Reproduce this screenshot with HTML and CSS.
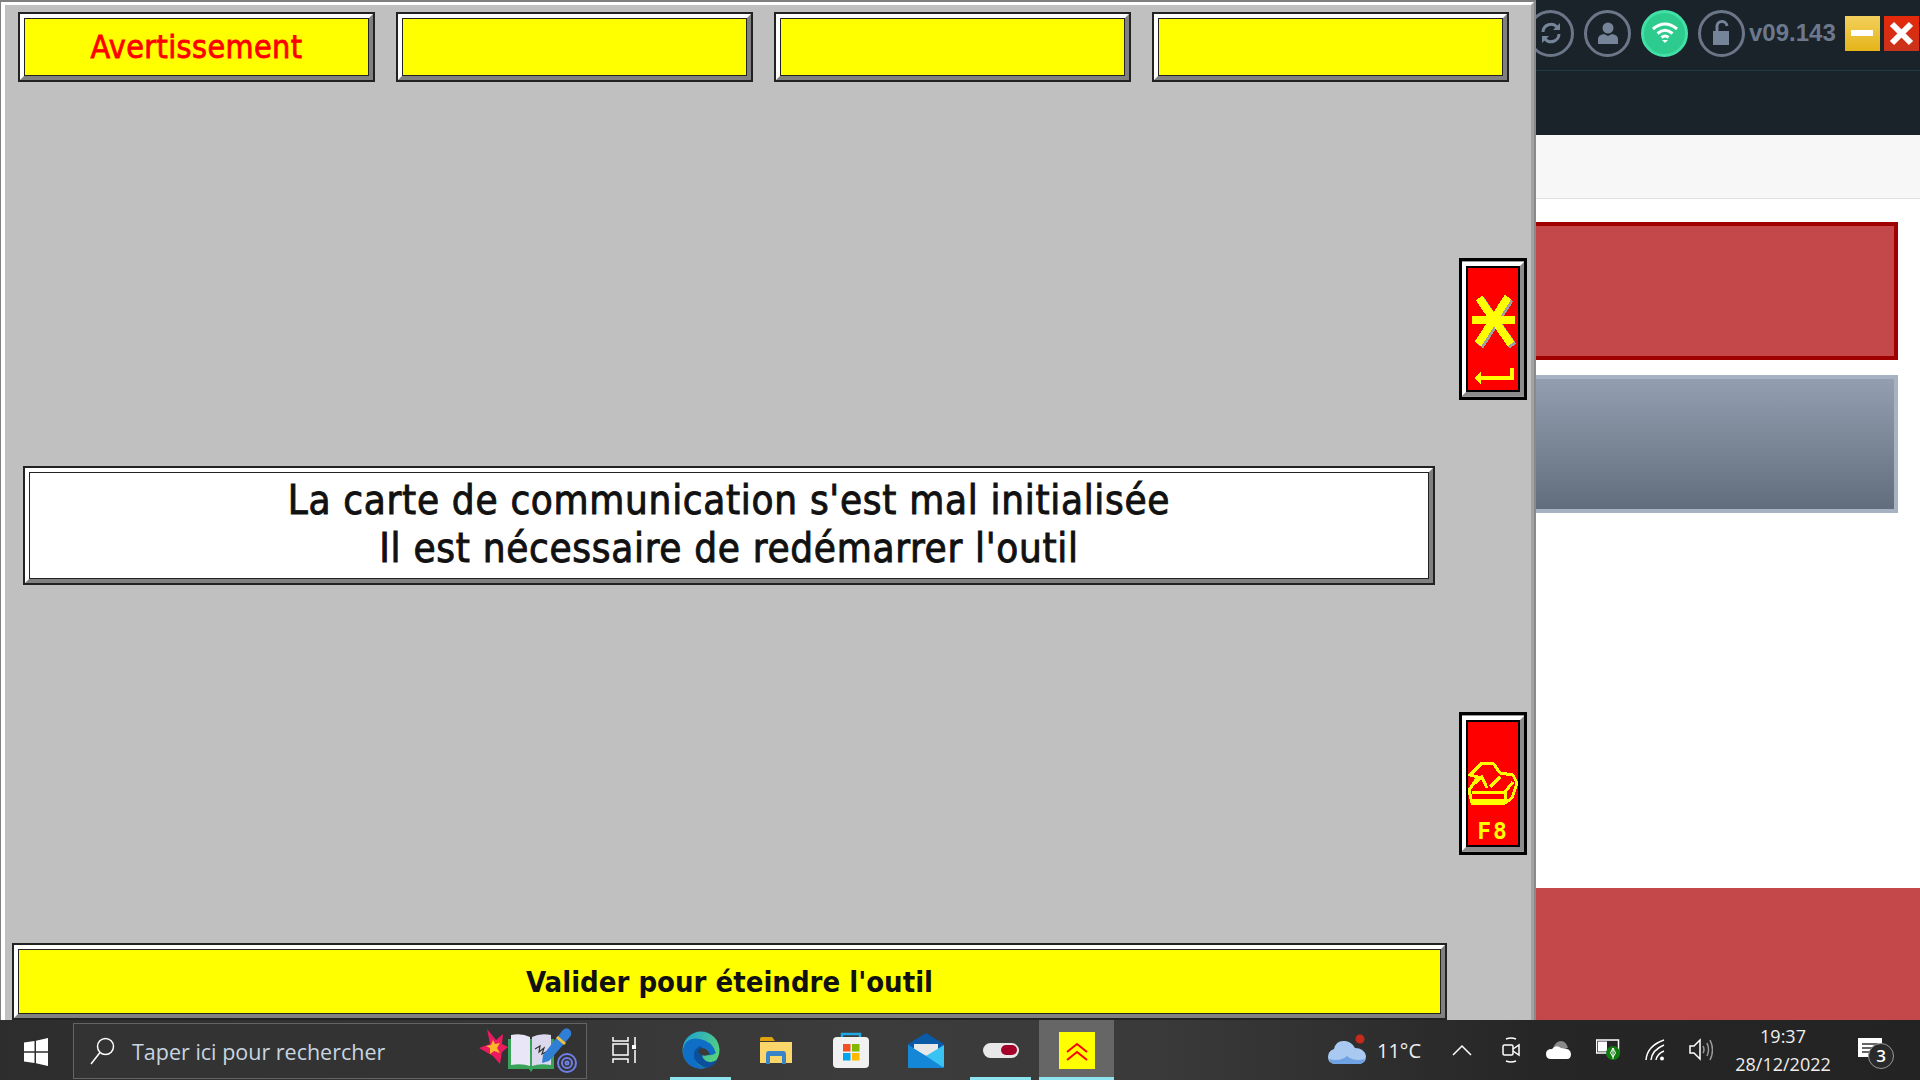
FILE: index.html
```html
<!DOCTYPE html>
<html lang="fr">
<head>
  <meta charset="UTF-8">
  <title>Avertissement</title>
  <link rel="stylesheet" href="styles.css">
</head>
<body>
  <div class="desktop">
    <!-- Tool window -->
    <div class="window">
      <div class="window-body">
        <div class="top-row">
          <div class="bevel tab"><div class="bevel-face tab-warning">Avertissement</div></div>
          <div class="bevel tab"><div class="bevel-face"></div></div>
          <div class="bevel tab"><div class="bevel-face"></div></div>
          <div class="bevel tab"><div class="bevel-face"></div></div>
        </div>

        <div class="middle">
          <div class="bevel message">
            <div class="bevel-face message-face">
              <div>La carte de communication s'est mal initialisée</div>
              <div>Il est nécessaire de redémarrer l'outil</div>
            </div>
          </div>
          <div class="keys">
            <div class="key key-enter">
              <div class="key-face">
                <svg class="key-icon" viewBox="0 0 50 122" width="50" height="122">
                  <g class="star-shadow">
                    <path d="M13 32L45 78M42 31L12 78"/>
                  </g>
                  <g class="star">
                    <path d="M4 52H47M11 30L43 76M40 29L10 76"/>
                  </g>
                  <path class="enter-arrow" d="M44 100V110H12"/>
                  <path class="enter-head" d="M6 110L13 103V117Z"/>
                </svg>
              </div>
            </div>
            <div class="key key-off">
              <div class="key-face">
                <svg class="key-icon" viewBox="0 0 50 123" width="50" height="123">
                  <path class="off-line" d="M14 41H25L32 51L45 53L49 61L44 76L37 81H4L1 68L10 55L2 53Z"/>
                  <path class="off-line" d="M4 70H37V78H4M37 70L45 60M7 61L14 55L19 66M22 65L32 55"/>
                </svg>
                <span class="key-label">F8</span>
              </div>
            </div>
          </div>
        </div>

        <div class="bevel confirm">
          <div class="bevel-face confirm-face">Valider pour éteindre l'outil</div>
        </div>
      </div>
    </div>

    <!-- App behind the tool window -->
    <div class="panel">
      <div class="panel-head">
        <div class="head-row">
          <div class="round-btn round-first">
            <svg viewBox="0 0 24 24" width="24" height="24"><path class="refresh" d="M4 11A8 8 0 0 1 18 6M20 13A8 8 0 0 1 6 18"/><path class="glyph" d="M21 2V9H14ZM3 22V15H10Z"/></svg>
          </div>
          <div class="round-btn">
            <svg viewBox="0 0 24 24" width="24" height="24"><circle class="glyph" cx="12" cy="7" r="5.5"/><path class="glyph" d="M2 23V18Q2 14 8 13L12 15L16 13Q22 14 22 18V23Z"/></svg>
          </div>
          <div class="round-btn round-wifi">
            <svg viewBox="0 0 28 24" width="28" height="24"><path class="wifi-arc" d="M2 8Q14 -2 26 8M6.500 12.500Q14 6 21.500 12.500M10.500 16.500Q14 13.500 17.500 16.500"/><path class="wifi-dot" d="M11 19H17L14 22Z"/></svg>
          </div>
          <div class="round-btn">
            <svg viewBox="0 0 24 26" width="24" height="26"><path class="shackle" d="M7 11V7A5 5 0 0 1 17 6"/><rect class="glyph" x="3" y="11" width="16" height="14"/></svg>
          </div>
          <span class="version">v09.143</span>
          <div class="win-btn win-min"><div class="min-bar"></div></div>
          <div class="win-btn win-close">
            <svg viewBox="0 0 35 35" width="35" height="35"><path class="close-x" d="M8 8L27 27M27 8L8 27"/></svg>
          </div>
        </div>
      </div>
      <div class="panel-strip"></div>
      <div class="box box-red"></div>
      <div class="box box-gray"></div>
      <div class="panel-foot"></div>
    </div>
  </div>

  <!-- Windows taskbar -->
  <div class="taskbar">
    <div class="start">
      <svg viewBox="0 0 24 28" width="24" height="28"><path class="white" d="M0 4.500L10.500 3V13.300H0ZM12 2.700L24 0V13.300H12ZM0 14.800H10.500V25L0 23.500ZM12 14.800H24V28L12 25.300Z"/></svg>
    </div>
    <div class="search">
      <svg viewBox="0 0 25 28" width="25" height="28"><circle class="thin" cx="15.500" cy="9.500" r="8"/><path class="thin" d="M10 15.500L1 27"/></svg>
      <span class="search-text">Taper ici pour rechercher</span>
      <svg class="search-art" viewBox="0 0 100 48" width="100" height="48">
        <path fill="#ec1a5e" d="M1 21L12 17L9 2L18 13L25 7L24 17L30 20L24 25L22 37L15 29Z"/>
        <path fill="#fbb62c" d="M15 13L17 17L22 16L19 21L22 26L16 24L12 27L12 21L8 19L13 18Z"/>
        <g transform="translate(2 0)">
          <path fill="#3aa35a" d="M28 12H74V42H53L51 45L49 42H28Z"/>
          <path fill="#e9e7f7" d="M31 8Q42 6 50 10V39Q42 36 31 38Z"/>
          <path fill="#dcd9ee" d="M52 10Q60 6 71 8V38Q60 36 52 39Z"/>
          <path class="scribble" d="M55 22L60 19L59 25L64 21L62 27L68 24"/>
        </g>
        <path fill="#2f7fd6" d="M65 28L84 4Q88 -1 92 3Q95 7 91 11L71 34L64 36Z"/>
        <path fill="#f3c13a" d="M80 9L88 16L86 18L78 11Z"/>
        <circle class="spiral" cx="89" cy="36" r="9"/>
        <circle class="spiral" cx="89" cy="36" r="5"/>
        <circle class="spiral" cx="89" cy="36" r="1.500"/>
      </svg>
    </div>
    <div class="apps">
      <div class="app app-tasks">
        <svg viewBox="0 0 24 26" width="24" height="26"><path class="thin" d="M1 0V4H16V0M1 7H16V18H1ZM1 26V22H16V26M23 0V8M23 13V26"/><rect class="white" x="20" y="8" width="5" height="4"/></svg>
      </div>
      <div class="app app-open">
        <svg viewBox="0 0 38 38" width="38" height="38">
          <defs>
            <linearGradient id="edgeTop" x1="0" y1="0" x2="1" y2="0.600"><stop offset="0" stop-color="#1b9fd8"/><stop offset="1" stop-color="#58d27a"/></linearGradient>
          </defs>
          <circle cx="19" cy="19" r="18.500" fill="url(#edgeTop)"/>
          <path fill="#0f6fc6" d="M1 18Q4 5 18 8Q30 10 34 22Q28 26 22 23Q14 17 13 26Q13 34 24 37Q10 40 3 29Q0 24 1 18Z"/>
          <path fill="#0c4f9c" d="M19 15Q11 17 12 26Q13 33 24 37Q32 36 36 28Q30 33 24 30Q18 26 22 20Z"/>
          <path fill="#3a3a3a" d="M17 18Q24 15 28 23Q23 26 20 24Q15 22 17 18Z"/>
        </svg>
      </div>
      <div class="app">
        <svg viewBox="0 0 32 27" width="32" height="27">
          <path fill="#e0a30f" d="M0 2Q0 0 2 0H12L15 4H0Z"/>
          <path fill="#fbd66b" d="M0 5H32V26H0Z"/>
          <path fill="#3a84c8" d="M6 27V17Q6 14 9 14H23Q26 14 26 17V27H22V19H10V27Z"/>
          <path fill="#fbd66b" d="M11 20H21V26H11Z"/>
        </svg>
      </div>
      <div class="app">
        <svg viewBox="0 0 36 36" width="36" height="36">
          <path class="store-handle" d="M9 8V2H27V8"/>
          <rect x="0" y="5" width="36" height="31" rx="4" fill="#f1f1f1"/>
          <rect x="10" y="12" width="7.500" height="7.500" fill="#f25022"/>
          <rect x="19" y="12" width="7.500" height="7.500" fill="#7fba00"/>
          <rect x="10" y="21" width="7.500" height="7.500" fill="#00a4ef"/>
          <rect x="19" y="21" width="7.500" height="7.500" fill="#ffb900"/>
        </svg>
      </div>
      <div class="app">
        <svg viewBox="0 0 36 35" width="36" height="35">
          <path fill="#0a5aa8" d="M0 11L18 0L36 11V20H0Z"/>
          <path fill="#e8e8e8" d="M6 11H30V20L18 23L6 18Z"/>
          <path fill="#38c3f2" d="M0 12L18 23L36 12V33Q36 35 34 35H2Q0 35 0 33Z"/>
          <path fill="#1487d6" d="M0 12L18 23L36 35H2Q0 35 0 33Z"/>
        </svg>
      </div>
      <div class="app app-open">
        <div class="toggle"><div class="toggle-dot"></div></div>
      </div>
      <div class="app app-active">
        <div class="tool-icon">
          <svg viewBox="0 0 36 37" width="36" height="37"><path class="chevron" d="M8 20L18 12L28 20M8 28L18 20L28 28"/></svg>
        </div>
      </div>
    </div>

    <div class="tray">
      <div class="tray-slot tray-weather">
        <svg viewBox="0 0 40 32" width="40" height="32">
          <path fill="#a9c9f2" d="M8 30Q0 30 0 23Q0 17 6 15Q8 6 17 7Q24 8 27 14Q36 14 38 22Q38 30 30 30Z"/>
          <path fill="#6ea2e2" d="M8 30Q2 30 1 25Q12 28 19 22Q26 28 37 25Q36 30 30 30Z"/>
          <circle cx="32" cy="5" r="4.500" fill="#c42b1c"/>
        </svg>
        <span class="temp">11°C</span>
      </div>
      <div class="tray-slot tray-caret">
        <svg viewBox="0 0 20 12" width="20" height="12"><path class="thin" d="M1 11L10 2L19 11"/></svg>
      </div>
      <div class="tray-slot tray-small">
        <svg viewBox="0 0 18 26" width="18" height="26"><path class="thin" d="M4 2Q9 0 14 2M4 24Q9 26 14 24"/><rect class="thin" x="1" y="8" width="10" height="10" rx="1.500"/><path class="thin" d="M11 12L17 8V18L11 14"/></svg>
      </div>
      <div class="tray-slot tray-small tray-drive">
        <svg viewBox="0 0 26 20" width="26" height="20"><path fill="#8a8a8a" d="M7 8Q10 1 15 1Q20 1 22 8Z"/><path class="white" d="M5 19Q0 19 0 14Q0 9 6 9Q10 4 15 8Q25 8 25 14Q25 19 21 19Z"/></svg>
      </div>
      <div class="tray-slot tray-battery">
        <svg viewBox="0 0 24 22" width="24" height="22">
          <rect class="thin" x="0.500" y="1" width="22" height="13"/>
          <rect class="white" x="2" y="2.500" width="9" height="10"/>
          <circle cx="17" cy="14" r="7" fill="#107c10"/>
          <path class="leaf" d="M17 9L14.500 14L17 18L19.500 14ZM17 9V20"/>
        </svg>
      </div>
      <div class="tray-slot tray-wifi">
        <svg viewBox="0 0 20 22" width="20" height="22"><path class="thin" d="M1 21Q2 7 19 1M6 21Q7 11 19 6M11 21Q12 15 19 12"/><circle class="white" cx="17" cy="19.500" r="2"/></svg>
      </div>
      <div class="tray-slot tray-small">
        <svg viewBox="0 0 24 24" width="24" height="24"><path class="thin" d="M1 8H5L11 2V21L5 15H1Z"/><path class="thin dim" d="M14 8Q16 12 14 15M18 5Q21 12 18 18M21 2Q26 12 21 22"/></svg>
      </div>
      <div class="clock">
        <div>19:37</div>
        <div>28/12/2022</div>
      </div>
      <div class="tray-slot tray-notes">
        <svg viewBox="0 0 24 24" width="24" height="24"><path class="white" d="M0 0H24V19H17L12 24V19H0Z"/><path class="note-line" d="M4 6H20M4 10H20M4 14H16"/></svg>
        <span class="note-count">3</span>
      </div>
    </div>
  </div>
</body>
</html>
```

FILE: styles.css
```css
html, body {
  margin: 0;
  padding: 0;
}
body {
  width: 1920px;
  height: 1080px;
  overflow: hidden;
  display: flex;
  flex-direction: column;
  font-family: "Open Sans", sans-serif;
}
svg {
  display: block;
}
.desktop {
  display: flex;
  height: 1020px;
}

/* Tool window */
.window {
  position: relative;
  z-index: 1;
  flex: 0 0 1536px;
  box-sizing: border-box;
  border: 2px solid #808080;
  border-bottom: none;
  border-left-width: 1px;
  border-right-color: #8a8a8a;
}
.window-body {
  box-sizing: border-box;
  height: 100%;
  display: flex;
  flex-direction: column;
  border: 3px solid;
  border-left-width: 4px;
  border-color: #fff #a2a2a2 #a2a2a2 #fff;
  border-bottom: none;
  background-color: #c0c0c0;
}
.top-row {
  display: flex;
  gap: 21px;
  margin: 7px 0 0 13px;
}
.bevel {
  box-sizing: border-box;
  display: flex;
  border: 2px solid #222;
}
.bevel-face {
  flex: 1;
  display: flex;
  align-items: center;
  justify-content: center;
  border: 4px solid;
  border-color: #fff #808080 #808080 #fff;
  box-shadow: inset 0 0 0 1px #222;
  background-color: #ff0;
}
.tab {
  width: 357px;
  height: 70px;
}
.tab-warning {
  font-family: "DejaVu Sans", sans-serif;
  font-stretch: condensed;
  font-size: 32px;
  letter-spacing: 0.4px;
  color: #f00;
  -webkit-text-stroke: 0.8px #f00;
}
.middle {
  flex: 1;
  display: flex;
  align-items: flex-start;
}
.message {
  width: 1412px;
  height: 119px;
  margin: 384px 0 0 18px;
}
.message-face {
  flex-direction: column;
  padding-bottom: 3px;
  background-color: #fff;
  font-family: "DejaVu Sans", sans-serif;
  font-stretch: condensed;
  font-size: 40px;
  letter-spacing: 0.7px;
  line-height: 48px;
  color: #111;
  -webkit-text-stroke: 0.9px #111;
}
.keys {
  display: flex;
  flex-direction: column;
  margin: 176px 0 0 24px;
  gap: 312px;
}
.key {
  box-sizing: border-box;
  width: 68px;
  display: flex;
  border: 3px solid #000;
  background-color: #999;
}
.key-enter {
  height: 142px;
}
.key-off {
  height: 143px;
}
.key-face {
  position: relative;
  flex: 1;
  margin: 1px 0;
  border: 4px solid;
  border-color: #fff #8c8c8c #8c8c8c #fff;
  background-color: #f00;
  box-shadow: inset 0 0 0 2px #000;
}
.key-icon {
  position: absolute;
  left: 2px;
  top: 2px;
  shape-rendering: crispEdges;
}
.star path {
  fill: none;
  stroke: #ff0;
  stroke-width: 8;
}
.star-shadow path {
  fill: none;
  stroke: #a0a0a0;
  stroke-width: 8;
}
.enter-arrow {
  fill: none;
  stroke: #ff0;
  stroke-width: 4;
}
.enter-head {
  fill: #ff0;
}
.off-line {
  fill: none;
  stroke: #ff0;
  stroke-width: 3;
}
.key-label {
  position: absolute;
  left: 0;
  right: 0;
  bottom: 3px;
  text-align: center;
  font-family: "DejaVu Sans Mono", monospace;
  font-weight: bold;
  font-size: 23px;
  letter-spacing: 2px;
  color: #ff0;
}
.confirm {
  width: 1435px;
  height: 77px;
  margin-left: 7px;
}
.confirm-face {
  font-family: "DejaVu Sans", sans-serif;
  font-stretch: condensed;
  font-weight: bold;
  font-size: 29px;
  color: #111;
}

/* App behind */
.panel {
  flex: 1;
  display: flex;
  flex-direction: column;
  background-color: #fff;
}
.panel-head {
  height: 135px;
  background-color: #1a222a;
}
.head-row {
  box-sizing: border-box;
  height: 71px;
  display: flex;
  align-items: center;
  padding-bottom: 4px;
  border-bottom: 1px solid #1f3a44;
}
.round-btn {
  box-sizing: border-box;
  flex: 0 0 47px;
  height: 47px;
  margin-right: 10px;
  display: flex;
  align-items: center;
  justify-content: center;
  border: 3px solid #6b7688;
  border-radius: 50%;
}
.round-first {
  margin-left: -9px;
}
.round-wifi {
  background-color: #2ecb8f;
  border-color: #43e0a6;
}
.glyph {
  fill: #76849a;
}
.refresh {
  fill: none;
  stroke: #76849a;
  stroke-width: 3;
}
.shackle {
  fill: none;
  stroke: #76849a;
  stroke-width: 3;
}
.wifi-arc {
  fill: none;
  stroke: #fff;
  stroke-width: 3;
}
.wifi-dot {
  fill: #fff;
}
.version {
  margin-left: -6px;
  font-family: "Liberation Sans", sans-serif;
  font-weight: bold;
  font-size: 24px;
  color: #6c798c;
}
.win-btn {
  flex: 0 0 35px;
  height: 35px;
  display: flex;
  align-items: center;
  justify-content: center;
}
.win-min {
  margin-left: 9px;
  background: linear-gradient(#f3d05c, #e4b418);
}
.min-bar {
  width: 22px;
  height: 6px;
  background-color: #fff;
  filter: blur(0.6px);
}
.win-close {
  margin-left: 4px;
  background: linear-gradient(#e5290a, #c9331c);
}
.close-x {
  fill: none;
  stroke: #fff;
  stroke-width: 6;
  filter: blur(0.6px);
}
.panel-strip {
  height: 63px;
  background-color: #f7f7f7;
  border-bottom: 1px solid #e2e2e2;
}
.box {
  box-sizing: border-box;
  height: 138px;
  margin-right: 22px;
  border: 4px solid;
  border-left: none;
}
.box-red {
  margin-top: 23px;
  border-color: #a00000;
  background-color: #c4474a;
}
.box-gray {
  margin-top: 15px;
  border-color: #a6b2c2;
  background: linear-gradient(#939eb0, #626d7c);
}
.panel-foot {
  margin-top: auto;
  height: 132px;
  background-color: #c4474a;
}

/* Taskbar */
.taskbar {
  height: 60px;
  display: flex;
  align-items: stretch;
  background: linear-gradient(90deg, #2d2d2d, #3c3c3c 45%, #3a3a3a 60%, #262626 80%, #232323);
  color: #eee;
}
.white {
  fill: #fff;
}
.thin {
  fill: none;
  stroke: #fff;
  stroke-width: 1.500;
}
.dim {
  stroke: #9a9a9a;
}
.start {
  flex: 0 0 73px;
  display: flex;
  align-items: center;
  box-sizing: border-box;
  padding: 4px 0 0 24px;
}
.search {
  box-sizing: border-box;
  flex: 0 0 514px;
  display: flex;
  align-items: center;
  height: 56px;
  margin-top: 3px;
  padding-left: 16px;
  background-color: #333;
  border: 1.500px solid #646464;
}
.search-text {
  margin-left: 17px;
  font-size: 21.500px;
  color: #c8d6e0;
}
.search-art {
  margin-left: auto;
  margin-right: 8px;
}
.scribble {
  fill: none;
  stroke: #333;
  stroke-width: 1.200;
}
.spiral {
  fill: none;
  stroke: #6f7fe8;
  stroke-width: 2;
}
.apps {
  display: flex;
  flex: 0 0 527px;
}
.app {
  position: relative;
  flex: 0 0 75px;
  display: flex;
  align-items: center;
  justify-content: center;
}
.app-tasks {
  flex-basis: 76px;
  padding-right: 2px;
  box-sizing: border-box;
}
.app-open::after {
  content: "";
  position: absolute;
  left: 7px;
  right: 7px;
  bottom: 0;
  height: 3px;
  background-color: #8ce4ee;
}
.app-active {
  margin-left: 1px;
  background-color: #666;
  box-shadow: inset 0 -3px 0 #8ce4ee;
}
.store-handle {
  fill: none;
  stroke: #1fa8e8;
  stroke-width: 2.500;
}
.toggle {
  box-sizing: border-box;
  width: 36px;
  height: 15px;
  display: flex;
  justify-content: flex-end;
  align-items: center;
  padding-right: 2px;
  border-radius: 8px;
  background-color: #e8e8e8;
}
.toggle-dot {
  width: 16px;
  height: 10px;
  border-radius: 5px;
  background-color: #a3002a;
}
.tool-icon {
  background-color: #ff0;
}
.chevron {
  fill: none;
  stroke: #f00;
  stroke-width: 2;
}
.tray {
  margin-left: auto;
  display: flex;
  align-items: center;
}
.tray-slot {
  display: flex;
  align-items: center;
  justify-content: center;
}
.tray-weather {
  width: 116px;
  gap: 9px;
  padding-left: 8px;
  box-sizing: border-box;
  justify-content: flex-start;
}
.temp {
  font-size: 20px;
  color: #eee;
}
.tray-caret {
  width: 52px;
}
.tray-small {
  width: 46px;
}
.tray-drive,
.tray-battery {
  width: 49px;
}
.tray-wifi {
  width: 46px;
}
.leaf {
  fill: none;
  stroke: #fff;
  stroke-width: 1;
}
.clock {
  width: 118px;
  text-align: center;
  font-size: 18px;
  line-height: 28px;
  color: #eee;
}
.tray-notes {
  position: relative;
  width: 78px;
  justify-content: flex-start;
  padding-left: 16px;
  box-sizing: border-box;
  margin-top: -1px;
}
.note-line {
  fill: none;
  stroke: #333;
  stroke-width: 1.500;
}
.note-count {
  position: absolute;
  left: 26px;
  top: 5px;
  width: 26px;
  height: 26px;
  box-sizing: border-box;
  border: 1px solid #999;
  border-radius: 50%;
  background-color: #2a2a2a;
  text-align: center;
  font-size: 17px;
  font-weight: 600;
  line-height: 24px;
  color: #fff;
}
```
